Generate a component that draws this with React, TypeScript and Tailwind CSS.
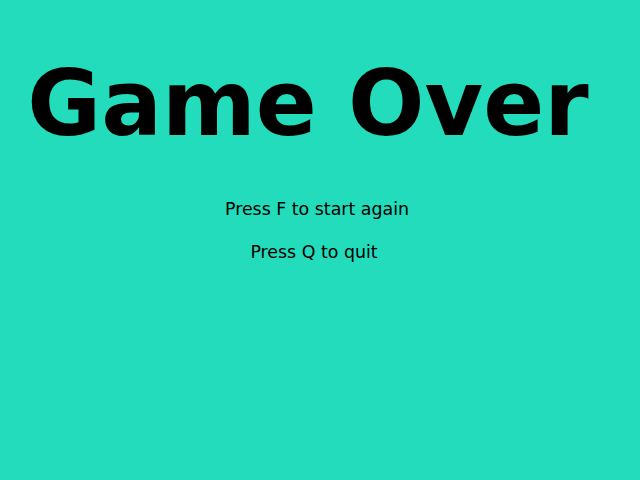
export default function App() {
  return (
    <div className="w-[640px] h-[480px] bg-[#23dcbb] flex flex-col items-center font-['DejaVu_Sans',sans-serif] text-black">
      <h1 className="mt-[59px] pr-[24px] text-[90px] leading-[90px] font-bold">Game Over</h1>
      <p className="mt-[50px] pr-[6px] text-[17.4px] leading-[20px]">Press F to start again</p>
      <p className="mt-[23px] pr-[12px] text-[17.4px] leading-[20px]">Press Q to quit</p>
    </div>
  );
}
